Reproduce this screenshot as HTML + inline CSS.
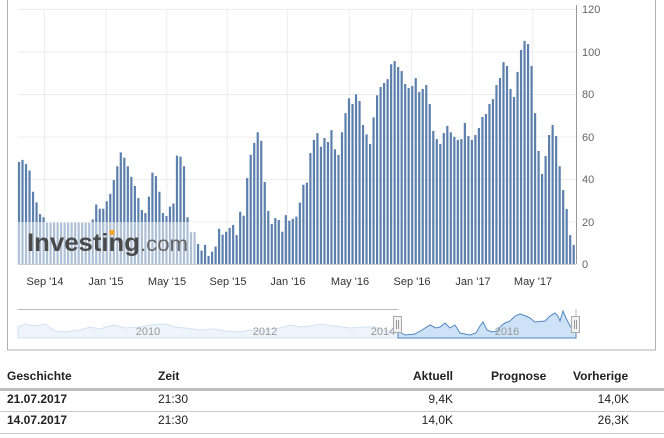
<!DOCTYPE html>
<html><head><meta charset="utf-8"><style>
body{margin:0;width:664px;height:438px;background:#fff;font-family:"Liberation Sans",Arial,sans-serif;position:relative;overflow:hidden}
.t{position:absolute;font-size:12px;color:#222;white-space:nowrap}
.b{font-weight:bold}
.r{text-align:right}
.ln{position:absolute;left:0;width:664px;background:#c8c8c8}
</style></head><body>
<svg id="s" width="664" height="352" style="position:absolute;left:0;top:0" xmlns="http://www.w3.org/2000/svg">
<rect x="7.5" y="-2" width="648" height="352" fill="none" stroke="#b0b0b0"/>
<g id="grid" stroke="#ececec" stroke-width="1"></g>
<g id="bars" fill="#5c80ad"></g>
<line x1="576.5" y1="5" x2="576.5" y2="264" stroke="#999"/>
<line x1="18" y1="264.5" x2="576" y2="264.5" stroke="#ccc"/>
<g font-size="11" fill="#666" font-family="Liberation Sans,Arial,sans-serif">
<text x="582" y="13">120</text><text x="582" y="56">100</text><text x="582" y="98">80</text><text x="582" y="141">60</text><text x="582" y="183">40</text><text x="582" y="226">20</text><text x="582" y="268">0</text>
</g>
<g font-size="11" fill="#333" text-anchor="middle" font-family="Liberation Sans,Arial,sans-serif">
<text x="45" y="285">Sep '14</text><text x="106" y="285">Jan '15</text><text x="167" y="285">May '15</text><text x="228" y="285">Sep '15</text><text x="288" y="285">Jan '16</text><text x="350" y="285">May '16</text><text x="412" y="285">Sep '16</text><text x="473" y="285">Jan '17</text><text x="533" y="285">May '17</text>
</g>
<rect x="18" y="222" width="179" height="42" fill="#fff" fill-opacity="0.5"/>
<text x="27" y="251" font-size="25" font-weight="bold" fill="#4a4a4a" textLength="113" lengthAdjust="spacingAndGlyphs" font-family="Liberation Sans,Arial,sans-serif">Investing</text>
<text x="140" y="251" font-size="21" fill="#666" textLength="48" lengthAdjust="spacingAndGlyphs" font-family="Liberation Sans,Arial,sans-serif">.com</text>
<rect x="109.5" y="230" width="5" height="5" fill="#f0a630"/>
<!-- navigator -->
<line x1="18" y1="309.5" x2="398" y2="309.5" stroke="#bbb"/>
<path d="M18 327 L25 324 L35 326 L45 324 L55 331 L65 332 L80 330 L90 327 L100 329 L110 326 L115 325 L125 328 L140 327 L150 325 L165 324 L175 327 L185 328 L200 330 L215 329 L225 331 L240 332 L250 330 L260 331 L270 329 L280 328 L290 325 L300 327 L310 326 L320 324 L335 326 L350 328 L365 327 L375 327 L385 331 L398 331 L398 338 L18 338 Z" fill="#eef4fb" stroke="#d3e2f1"/>
<path d="M398 331 L405 335 L415 334 L422 330 L430 325 L436 328 L440 327 L445 323 L450 328 L455 325 L460 333 L470 335 L476 333 L480 326 L483 322 L487 330 L492 332 L497 331 L501 326 L505 323 L510 321 L515 316 L520 314 L526 316 L530 318 L535 322 L545 321 L550 316 L555 313 L558 316 L560 321 L563 311 L566 318 L570 326 L576 333 L576 338 L398 338 Z" fill="#cde1f7" stroke="#4f87c4"/>
<g font-size="11" fill="#999" text-anchor="middle" font-family="Liberation Sans,Arial,sans-serif">
<text x="148" y="335">2010</text><text x="265" y="335">2012</text><text x="383" y="335">2014</text><text x="507" y="335">2016</text>
</g>
<line x1="576" y1="309" x2="576" y2="316" stroke="#bbb"/>
<rect x="393.5" y="316.5" width="8" height="16" fill="#f2f2f2" stroke="#aaa"/>
<line x1="396.5" y1="320" x2="396.5" y2="329" stroke="#999"/><line x1="398.5" y1="320" x2="398.5" y2="329" stroke="#999"/>
<rect x="571.5" y="316.5" width="8" height="16" fill="#f2f2f2" stroke="#aaa"/>
<line x1="574.5" y1="320" x2="574.5" y2="329" stroke="#999"/><line x1="576.5" y1="320" x2="576.5" y2="329" stroke="#999"/>
</svg>
<div class="t b" style="left:7px;top:369px">Geschichte</div>
<div class="t b" style="left:158px;top:369px">Zeit</div>
<div class="t b r" style="left:393px;width:60px;top:369px">Aktuell</div>
<div class="t b" style="left:491px;top:369px">Prognose</div>
<div class="t b" style="left:573px;top:369px">Vorherige</div>
<div class="ln" style="top:388px;height:3px;background:#bdbdbd"></div>
<div class="t b" style="left:7px;top:392px">21.07.2017</div>
<div class="t" style="left:158px;top:392px">21:30</div>
<div class="t r" style="left:393px;width:60px;top:392px">9,4K</div>
<div class="t r" style="left:569px;width:60px;top:392px">14,0K</div>
<div class="ln" style="top:411px;height:1px"></div>
<div class="t b" style="left:7px;top:413px">14.07.2017</div>
<div class="t" style="left:158px;top:413px">21:30</div>
<div class="t r" style="left:393px;width:60px;top:413px">14,0K</div>
<div class="t r" style="left:569px;width:60px;top:413px">26,3K</div>
<div class="ln" style="top:433px;height:1px"></div>
<script>
var v=[48,49,47,44,34,29,23.5,22,19.5,19.5,19.5,19.5,19.5,19.5,19.5,19.5,19.5,19.5,19.5,19.5,19.5,
21,28,26,26,29.5,33,39.5,46,52.5,50,46,41,36.7,31,25.4,24,31.7,43,41.4,34,24,22.6,27,28.5,51,50.5,46,22,
15,15,9.4,
6.3,9,3.8,5.8,8.2,16.6,13.8,15.2,17,18.4,13.6,24.6,22.7,40.5,51.4,57,62,58,38.6,25,18.8,21.6,20.7,15.2,23,20.4,21.3,22.3,28.9,37.3,38.3,52.2,58.4,61.6,55.2,59.3,57.4,63,54,51.3,62,71,78,75.3,79.8,76.7,65.4,61,56.5,69,79.4,83.3,85.2,
87,94,95.5,92.7,90.8,84.7,82.8,83.8,87.5,81,82.4,84.2,75.3,62.6,58.8,56.5,61.6,65,62,59.8,58.4,58.8,66.4,60.2,58.4,60.7,64,69.2,70.6,75.3,77.6,84.2,87.5,95,93.2,82.4,78.6,90.4,100.7,105,103.5,93.2,71,53.2,42.4,50.8,60.7,65.4,60.2,46,34.8,25.9,13.6,9];
var ns="http://www.w3.org/2000/svg",g=document.getElementById("bars"),gr=document.getElementById("grid");
var n=v.length,step=(573.7-19)/(n-1);
for(var i=0;i<n;i++){var r=document.createElementNS(ns,"rect");var h=v[i]*2.125;var x=19+i*step-1.1;
r.setAttribute("x",x.toFixed(2));r.setAttribute("y",(264-h).toFixed(2));r.setAttribute("width","2.2");r.setAttribute("height",h.toFixed(2));g.appendChild(r);}
[9,51.5,94,136.5,179,221.5].forEach(function(y){var l=document.createElementNS(ns,"line");l.setAttribute("x1",18);l.setAttribute("x2",576);l.setAttribute("y1",y+0.5);l.setAttribute("y2",y+0.5);gr.appendChild(l);});
[44.3,106,166.7,227.3,287.3,349.3,411.7,472.3,532.7].forEach(function(x){var l=document.createElementNS(ns,"line");l.setAttribute("x1",x);l.setAttribute("x2",x);l.setAttribute("y1",9);l.setAttribute("y2",264);gr.appendChild(l);});
</script>
</body></html>
